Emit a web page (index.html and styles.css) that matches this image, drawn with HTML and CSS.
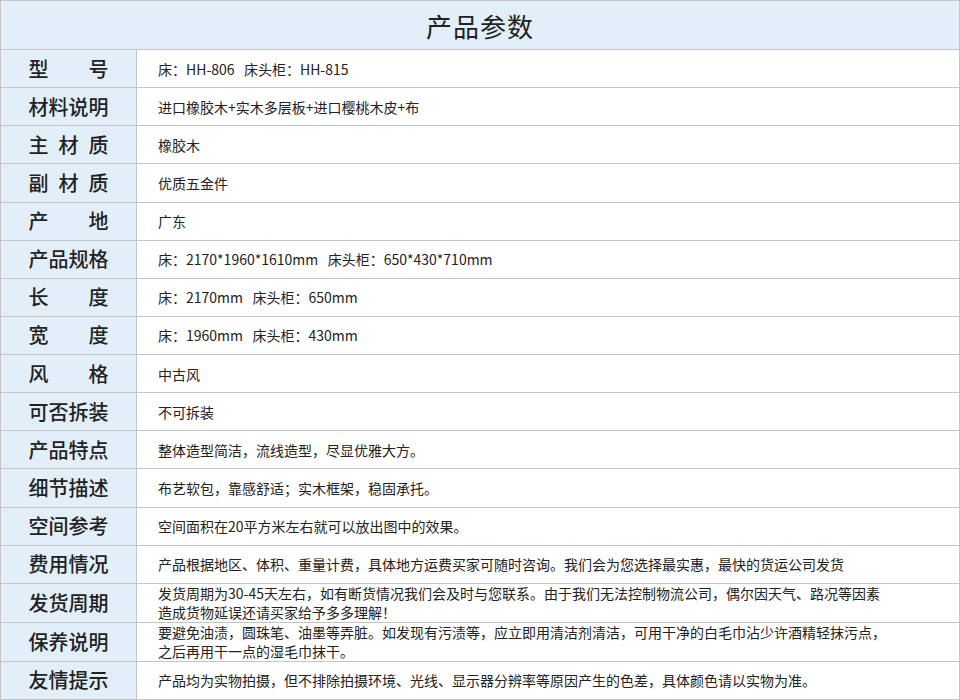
FILE: index.html
```html
<!DOCTYPE html>
<html lang="zh-CN">
<head>
<meta charset="utf-8">
<title>产品参数</title>
<link rel="stylesheet" href="styles.css">
</head>
<body>
<div class="spec">
  <div class="spec-title">产品参数</div>

  <div class="label"><span>型号</span></div>
  <div class="value">床：HH-806&nbsp;&nbsp;&nbsp;床头柜：HH-815</div>

  <div class="label"><span>材料说明</span></div>
  <div class="value">进口橡胶木+实木多层板+进口樱桃木皮+布</div>

  <div class="label"><span>主材质</span></div>
  <div class="value">橡胶木</div>

  <div class="label"><span>副材质</span></div>
  <div class="value">优质五金件</div>

  <div class="label"><span>产地</span></div>
  <div class="value">广东</div>

  <div class="label"><span>产品规格</span></div>
  <div class="value">床：2170*1960*1610mm&nbsp;&nbsp;&nbsp;床头柜：650*430*710mm</div>

  <div class="label"><span>长度</span></div>
  <div class="value">床：2170mm&nbsp;&nbsp;&nbsp;床头柜：650mm</div>

  <div class="label"><span>宽度</span></div>
  <div class="value">床：1960mm&nbsp;&nbsp;&nbsp;床头柜：430mm</div>

  <div class="label"><span>风格</span></div>
  <div class="value">中古风</div>

  <div class="label"><span>可否拆装</span></div>
  <div class="value">不可拆装</div>

  <div class="label"><span>产品特点</span></div>
  <div class="value">整体造型简洁，流线造型，尽显优雅大方。</div>

  <div class="label"><span>细节描述</span></div>
  <div class="value">布艺软包，靠感舒适；实木框架，稳固承托。</div>

  <div class="label"><span>空间参考</span></div>
  <div class="value">空间面积在20平方米左右就可以放出图中的效果。</div>

  <div class="label"><span>费用情况</span></div>
  <div class="value">产品根据地区、体积、重量计费，具体地方运费买家可随时咨询。我们会为您选择最实惠，最快的货运公司发货</div>

  <div class="label"><span>发货周期</span></div>
  <div class="value two">发货周期为30-45天左右，如有断货情况我们会及时与您联系。由于我们无法控制物流公司，偶尔因天气、路况等因素<br>造成货物延误还请买家给予多多理解！</div>

  <div class="label"><span>保养说明</span></div>
  <div class="value two">要避免油渍，圆珠笔、油墨等弄脏。如发现有污渍等，应立即用清洁剂清洁，可用干净的白毛巾沾少许酒精轻抹污点，<br>之后再用干一点的湿毛巾抹干。</div>

  <div class="label"><span>友情提示</span></div>
  <div class="value">产品均为实物拍摄，但不排除拍摄环境、光线、显示器分辨率等原因产生的色差，具体颜色请以实物为准。</div>
</div>
</body>
</html>
```

FILE: styles.css
```css
html, body {
  margin: 0;
  padding: 0;
  background: #ffffff;
}

.spec {
  box-sizing: border-box;
  width: 960px;
  height: 700px;
  display: grid;
  grid-template-columns: 135px 1fr;
  grid-template-rows: 48px repeat(17, 1fr);
  gap: 1px;
  background: #c4c4c4;
  border: 1px solid #c4c4c4;
  font-family: "Noto Sans CJK SC", "Noto Sans", sans-serif;
  color: #222222;
}

.spec-title {
  grid-column: 1 / 3;
  background: #e2eff9;
  display: flex;
  align-items: center;
  justify-content: center;
  font-size: 26px;
  font-weight: 400;
  letter-spacing: 1px;
  color: #222222;
}

.label {
  background: #e2eff9;
  display: flex;
  align-items: center;
  justify-content: center;
  font-size: 20px;
  font-weight: 500;
  color: #222222;
}

.label span {
  display: block;
  width: 80px;
  text-align: justify;
  text-align-last: justify;
  line-height: 24px;
}

.value {
  background: #ffffff;
  display: flex;
  align-items: center;
  padding-left: 21px;
  font-size: 14px;
  line-height: 18px;
  color: #222222;
  white-space: nowrap;
}

.value.two {
  display: block;
  align-self: stretch;
  line-height: 19px;
  overflow: visible;
}
```
